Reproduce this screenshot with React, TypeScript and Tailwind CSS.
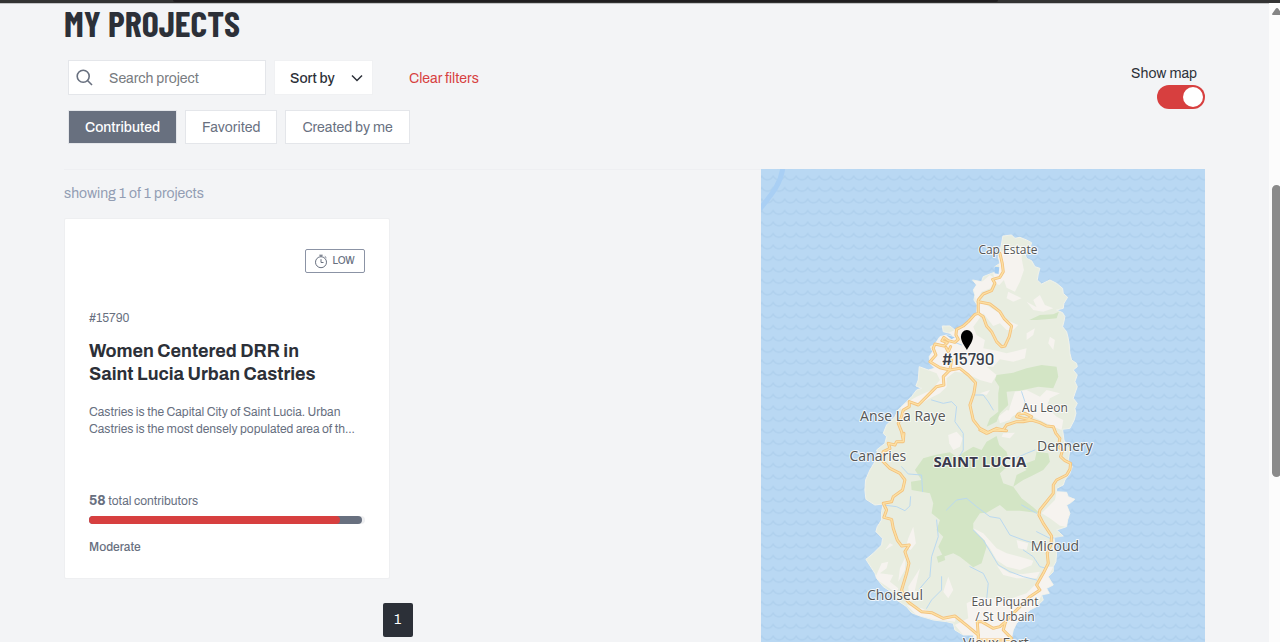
import React, { useState } from "react";

const FOREST = [
  "M470 465 520 458 560 445 605 435 650 440 655 470 640 505 595 500 560 508 540 512 500 515 505 555 480 580 470 605 440 620 450 595 475 575 475 520 478 500 465 480Z",
  "M568 300 600 285 640 283 657 275 650 295 620 298 590 300Z",
  "M250 715 285 705 330 697 350 710 400 680 425 690 440 665 470 648 478 675 500 695 505 715 470 728 500 742 480 760 490 790 520 800 545 835 580 862 600 880 540 872 500 872 480 855 440 878 420 880 400 910 400 930 435 962 440 980 425 1030 400 1042 360 1010 340 1000 310 1010 295 980 310 950 290 930 300 900 275 880 280 850 270 820 215 810 213 785 245 780 225 750Z",
  "M590 695 625 700 630 725 610 750 575 768 550 780 520 800 530 765 560 750 545 735 585 720Z",
  "M290 1010 312 1002 316 1020 295 1028Z",
];

const URBAN = [
  "M480 95 548 90 545 115 552 150 540 185 525 215 500 203 492 180 478 195 465 190 460 160 478 150 474 115Z",
  "M400 182 428 184 450 165 465 175 452 205 425 215 408 245 402 210Z",
  "M412 245 440 255 478 280 500 300 535 315 520 330 500 330 480 310 460 318 430 280 400 320 410 345 435 360 430 385 470 392 500 400 560 385 555 415 520 425 480 418 460 440 440 440 470 465 455 490 420 480 400 470 380 460 345 455 320 475 320 500 300 520 270 535 245 550 215 550 190 575 178 560 230 530 275 510 300 480 290 460 238 440 270 448 268 410 278 375 300 350 345 330 400 290Z",
  "M560 245 590 262 580 240 600 225 615 255 640 265 610 275 580 270Z",
  "M505 215 545 235 520 245 500 235Z M560 340 585 325 580 345 560 360Z M630 350 645 360 640 390 625 370Z",
  "M525 515 560 510 600 530 620 510 660 520 630 535 620 560 650 590 670 600 665 630 640 620 600 600 540 570 525 585 500 600 510 560Z",
  "M325 645 350 635 368 655 360 680 340 690 328 670Z",
  "M475 590 500 570 525 575 510 600 480 610Z M420 520 450 510 440 525Z M490 640 525 638 510 655 485 650Z",
  "M650 815 680 817 685 830 705 838 690 850 680 855 690 880 683 900 680 920 660 917 630 895 605 880 645 840Z",
  "M205 955 220 920 228 970 212 990 198 980Z M160 975 135 990 150 970Z",
  "M105 1075 125 1030 145 1025 140 1045 120 1060 160 1065 150 1085 175 1105 170 1120Z",
  "M180 1045 197 1010 195 1050 175 1085Z M205 1100 240 1045 225 1110 240 1130 210 1145Z M310 1115 325 1070 340 1110 325 1135Z",
  "M365 970 375 950 400 970 420 980 418 1010 400 1010 390 985Z",
  "M400 925 430 940 470 985 500 1000 540 1010 580 1022 575 1036 540 1050 500 1040 470 1020 450 985Z",
  "M530 960 565 970 560 990 535 985Z M470 1035 510 1060 550 1062 600 1055 590 1075 530 1075 490 1065Z",
  "M625 1040 640 1040 625 1070 640 1095 620 1105 628 1120 605 1125 590 1160 550 1190 510 1266 405 1266 400 1245 370 1245 345 1215 385 1195 380 1150 420 1130 500 1140 560 1120 600 1080Z",
  "M200 1155 245 1165 300 1190 350 1185 345 1205 280 1198 230 1185Z",
];

const RIVERS = [
  "M110 545 125 550 M275 540 310 550 335 545 350 560 345 605 370 640 370 690 355 715",
  "M405 525 430 525 445 545 460 570",
  "M545 515 555 545 550 580",
  "M185 740 205 762 245 765 248 815",
  "M130 855 170 860 195 872 210 858 212 830",
  "M320 870 350 840 380 835 410 860 450 890 480 895 510 945 550 960 600 975",
  "M290 900 295 950 275 1010 270 1070 240 1105",
  "M400 930 430 960 475 1035 510 1055 550 1070 590 1080",
  "M550 990 580 1010 600 1040 620 1045",
  "M545 855 590 880 M590 935 630 955 670 950",
  "M305 1070 305 1110 275 1140 260 1165 M390 1040 430 1060 445 1090 440 1140",
  "M340 365 365 375 M520 718 560 700 585 690",
];

const ROADS = [
  "M480 100 487 130 490 155 480 172 458 178 465 190 455 212 430 222 415 240 415 280 405 283 385 305 370 318 350 328 348 345 355 358 345 367 325 362 312 352 306 362 322 368 312 378 285 372 280 385 288 405 270 425 300 443 330 450 360 445 385 465 407 488 402 520 390 555 400 600 420 625 445 638 470 625 490 630 500 615 530 605 550 605 575 600 600 608 620 618 640 620 648 640 660 655 655 680 668 690 662 710 675 722 692 730 690 748 680 765 650 780 640 795 640 820 600 870 597 885 610 910 635 948 633 975 622 1000 625 1030 610 1060 590 1095 600 1110 570 1130 540 1160 510 1190 497 1205 490 1230 515 1255 505 1270",
  "M415 245 450 252 480 275 492 295 515 318 508 350 495 378 485 380 470 365 455 335 440 318 430 290 415 280",
  "M332 380 325 395 318 382 M335 420 330 450 310 470 312 495 290 500 270 520 235 555 208 545 208 560 190 570 185 590 175 610 185 635 190 660 192 640 190 665 170 665 165 675 145 670 150 685 130 695 125 720 150 745 180 760 195 780 188 810 160 830 155 845 130 850 140 870 132 892 155 898 160 925 172 960 185 978 208 975 195 995 207 1030 200 1060 185 1110 195 1135 210 1150 245 1175 275 1178 310 1195 345 1188 385 1220 415 1245 415 1270",
  "M415 1245 412 1205 425 1205 460 1225 480 1220 497 1205 M415 1260 515 1260",
  "M575 600 530 590 535 582 555 580 575 590 565 598 M420 630 440 640 460 630 500 632",
];

const COAST =
  "M490 48 515 45 525 55 540 52 560 60 575 68 570 85 555 100 560 115 575 122 585 140 600 145 595 162 592 180 605 192 630 180 650 190 668 205 670 220 683 232 672 250 670 265 650 270 668 278 675 290 672 305 668 320 680 335 685 355 688 375 690 400 695 420 710 430 712 440 700 450 712 465 705 485 712 500 705 520 700 535 712 550 705 565 708 580 703 600 690 625 668 628 672 660 690 690 685 720 697 740 690 760 675 780 670 795 650 805 650 815 680 817 685 830 705 838 690 850 680 855 690 880 683 900 680 920 650 930 670 948 642 952 645 975 650 1000 648 1025 640 1040 640 1055 625 1070 640 1095 620 1105 628 1120 605 1125 610 1140 590 1160 570 1170 550 1190 530 1210 520 1230 510 1275 405 1275 400 1245 370 1245 345 1230 340 1210 320 1205 280 1200 240 1188 215 1178 200 1160 170 1140 160 1120 130 1100 110 1075 105 1060 78 1018 100 1000 125 975 128 955 108 935 112 920 125 900 125 875 130 852 105 855 78 838 75 810 77 780 90 750 105 725 115 705 110 690 135 670 140 650 130 640 140 615 165 590 175 570 200 545 215 530 230 510 245 505 228 498 235 480 238 440 265 450 285 445 270 430 268 410 278 395 272 380 285 372 300 350 320 345 342 350 330 340 310 335 307 318 330 318 345 330 365 320 385 305 400 290 410 280 412 255 402 240 405 225 400 210 410 195 398 180 425 185 430 170 455 160 470 155 465 140 480 130 475 110 480 95 485 70Z";

const PLACES = [
  { x: 1008, y: 254, size: 12, name: "Cap Estate" },
  { x: 903, y: 421, size: 14, name: "Anse La Raye" },
  { x: 1045, y: 412, size: 12, name: "Au Leon" },
  { x: 1065, y: 451, size: 14, name: "Dennery" },
  { x: 878, y: 461, size: 14, name: "Canaries" },
  { x: 1055, y: 551, size: 14, name: "Micoud" },
  { x: 895, y: 600, size: 14, name: "Choiseul" },
  { x: 1005, y: 606, size: 12, name: "Eau Piquant" },
  { x: 1005, y: 621, size: 12, name: "/ St Urbain" },
  { x: 996, y: 648, size: 14, name: "Vieux Fort" },
];

function IslandMap() {
  return (
    <svg
      className="absolute inset-0 h-full w-full"
      viewBox="761 169 444 473"
      preserveAspectRatio="xMidYMin slice"
      role="img"
      aria-label="Map of Saint Lucia"
    >
      <defs>
        <pattern id="waves" x="761.8" y="174" width="11.5" height="11.5" patternUnits="userSpaceOnUse">
          <path d="M-1 3 0 2C3 7 8.500 7 11.500 2L12.500 3" fill="none" stroke="#afd0ed" strokeWidth="1.400" />
        </pattern>
        <clipPath id="land">
          <path d={COAST} />
        </clipPath>
      </defs>
      <rect x="600" y="169" width="800" height="900" fill="#b9d8f3" />
      <rect x="600" y="169" width="800" height="900" fill="url(#waves)" />
      <path d="M783 167C781 184 772 194 760 209" fill="none" stroke="#a9cff4" strokeWidth="5" />
      <g transform="translate(840 220) scale(0.33333)" strokeLinejoin="round" strokeLinecap="round">
        <path d={COAST} fill="#e8ede0" stroke="#f1f2ea" strokeWidth="3" />
        <g clipPath="url(#land)">
          {URBAN.map((d) => (
            <path key={d} d={d} fill="#f6f3ef" />
          ))}
          {FOREST.map((d) => (
            <path key={d} d={d} fill="#d3e5c5" />
          ))}
          {RIVERS.map((d) => (
            <path key={d} d={d} fill="none" stroke="#b9d8f0" strokeWidth="3" />
          ))}
        </g>
        <path d="M465 140 478 142 476 162 464 160Z M318 344 345 352 335 358Z" fill="#a3cdf3" />
        {ROADS.map((d) => (
          <path key={d} d={d} fill="none" stroke="#f3c27e" strokeWidth="9" />
        ))}
        {ROADS.map((d) => (
          <path key={d} d={d} fill="none" stroke="#fde0a3" strokeWidth="4" />
        ))}
      </g>
      <g
        fontFamily="'Open Sans', 'Noto Sans', sans-serif"
        textAnchor="middle"
        fill="#555555"
        stroke="#ffffff"
        strokeOpacity="0.8"
        strokeWidth="2"
        strokeLinejoin="round"
        paintOrder="stroke"
      >
        {PLACES.map((p) => (
          <text key={p.name} x={p.x} y={p.y} fontSize={p.size}>
            {p.name}
          </text>
        ))}
        <text x="980" y="467" fontSize="15" fontWeight="700" fill="#3a3a4d">
          SAINT LUCIA
        </text>
        <text x="968" y="365" fontSize="17" fontWeight="500" fill="#3a3f4a" fontFamily="Barlow, Roboto, sans-serif">
          #15790
        </text>
      </g>
      <path d="M967 350C964.500 345.500 961 341.500 961 336.500A6 6.500 0 0 1 973 336.500C973 341.500 969.500 345.500 967 350Z" fill="#000" />
    </svg>
  );
}

function StopwatchIcon() {
  return (
    <svg width="14" height="15" viewBox="0 0 14 15" fill="none" stroke="currentColor" aria-hidden="true">
      <circle cx="7" cy="8.200" r="5.500" strokeWidth="1" />
      <path d="M7 5.200V8.500H9.500M5.300 1.200H8.700M7 1.200V2.700M10.800 2.400 12.400 3.800" strokeWidth="1" />
    </svg>
  );
}

function ProjectCard() {
  return (
    <article className="flex flex-col rounded-xs border border-[#eeeff1] bg-white px-6 pt-[30px] pb-[21px] text-[#68707f]">
      <div className="flex h-6 w-[60px] items-center justify-center gap-1 self-end rounded-xs border border-[#8b93a5] text-[10px] font-medium">
        <StopwatchIcon />
        <span>LOW</span>
      </div>
      <p className="mt-[35px] text-xs leading-5">#15790</p>
      <h2 className="mt-3 text-lg leading-[23px] font-bold text-[#2c3038]">
        Women Centered DRR in
        <br />
        Saint Lucia Urban Castries
      </h2>
      <p className="mt-[18px] text-xs leading-[17px]">
        Castries is the Capital City of Saint Lucia. Urban
        <br />
        Castries is the most densely populated area of th...
      </p>
      <p className="mt-[53px] text-xs leading-5">
        <b className="text-sm">58</b> total contributors
      </p>
      <div className="mt-[5px] h-2 rounded-full bg-[#eeeff1]">
        <div className="h-2 w-[99%] rounded-full bg-[#68707f]">
          <div className="h-2 w-[92%] rounded-full bg-[#d73f3f]" />
        </div>
      </div>
      <p className="mt-[13px] text-xs leading-5 font-medium">Moderate</p>
    </article>
  );
}

const TABS = ["Contributed", "Favorited", "Created by me"];

export default function App() {
  const [tab, setTab] = useState("Contributed");
  const [showMap, setShowMap] = useState(true);

  return (
    <div className="flex min-h-screen flex-col bg-[#f3f4f6] font-['Archivo','Liberation_Sans',Arial,sans-serif] text-sm text-[#2c3038]">
      <div className="h-[3px] bg-[#333333] pr-[22%] pl-[13.5%]">
        <div className="h-[2px] rounded-b bg-[#201e20]" />
      </div>
      <div className="flex grow">
        <main className="flex grow flex-col border-t border-[#c4c5c7] px-16">
          <h1 className="h-11 font-['Barlow_Condensed','Roboto_Condensed','Open_Sans_Condensed',Roboto,sans-serif] text-[36px] leading-[38px] font-bold">
            MY PROJECTS
          </h1>

          <div className="mt-3 flex items-start justify-between">
            <div className="flex flex-col gap-[15px] pl-1">
              <div className="flex items-center">
                <div className="flex h-[35px] w-[198px] items-center border border-[#e4e6ea] bg-white pl-[7px]">
                  <svg className="shrink-0" width="17" height="17" viewBox="0 0 17 17" fill="none" stroke="#68707f" strokeWidth="1.600" aria-hidden="true">
                    <circle cx="7.200" cy="7.200" r="6" />
                    <path d="M11.500 11.500 16 16" />
                  </svg>
                  <input
                    type="search"
                    aria-label="Search project"
                    placeholder="Search project"
                    className="ml-4 w-full min-w-0 bg-transparent pt-[2px] outline-none placeholder:text-[#777b80]"
                  />
                </div>
                <div className="relative ml-2">
                  <select
                    aria-label="Sort by"
                    className="h-[35px] w-[99px] appearance-none border border-[#f0f1f3] bg-white pt-[2px] pl-[15px] font-medium outline-none"
                  >
                    <option>Sort by</option>
                  </select>
                  <svg className="pointer-events-none absolute top-3 right-[10px]" width="12" height="12" viewBox="0 0 12 12" fill="none" stroke="#2c3038" strokeWidth="1.500" aria-hidden="true">
                    <path d="M1 3.500 6 8.500 11 3.500" />
                  </svg>
                </div>
                <a href="#clear" className="ml-9 pt-[2px] text-[#d73f3f]">
                  Clear filters
                </a>
              </div>
              <div className="flex gap-2">
                {TABS.map((name) => (
                  <button
                    key={name}
                    type="button"
                    onClick={() => setTab(name)}
                    className={
                      tab === name
                        ? "h-[34px] border border-[#e4e6ea] bg-[#68707f] px-4 pt-[2px] font-medium text-white"
                        : "h-[34px] border border-[#e4e6ea] bg-white px-4 pt-[2px] text-[#68707f]"
                    }
                  >
                    {name}
                  </button>
                ))}
              </div>
            </div>

            <label className="flex cursor-pointer flex-col items-end pt-1">
              <span className="pr-2 leading-5">Show map</span>
              <input
                type="checkbox"
                role="switch"
                checked={showMap}
                onChange={() => setShowMap(!showMap)}
                className="peer sr-only"
              />
              <span className="mt-px flex h-6 w-12 items-center rounded-full bg-[#a0a6b1] p-[2px] peer-checked:justify-end peer-checked:bg-[#d73f3f]">
                <span className="size-5 rounded-full bg-white" />
              </span>
            </label>
          </div>

          <div className="mt-[25px] flex grow">
            <section className="flex grow flex-col border-t border-[#eeeff2] pr-[30px]">
              <p className="mt-[14px] leading-5 text-[#929db3]">showing 1 of 1 projects</p>
              <div className="mt-[14px] grid grid-cols-2 gap-4">
                <ProjectCard />
              </div>
              <nav aria-label="Pages" className="mt-6 flex justify-center">
                <button type="button" className="h-[34px] w-[30px] rounded-xs bg-[#2c3038] text-white">
                  1
                </button>
              </nav>
            </section>
            {showMap && (
              <section className="relative w-[38.9%] shrink-0 overflow-hidden">
                <IslandMap />
              </section>
            )}
          </div>
        </main>

        <div aria-hidden="true" className="relative w-[11px] shrink-0 overflow-hidden bg-[#fcfcfc]">
          <svg className="absolute top-[5px] left-[3px]" width="10" height="7" viewBox="0 0 10 7">
            <path d="M5 0Q6 0 6.500 1L10 6Q10 7 9 7H1Q0 7 0 6L3.500 1Q4 0 5 0Z" fill="#858585" />
          </svg>
          <div className="absolute top-[182px] left-[3px] h-[292px] w-[9px] rounded-full bg-[#8b8b8b]" />
        </div>
      </div>
    </div>
  );
}
